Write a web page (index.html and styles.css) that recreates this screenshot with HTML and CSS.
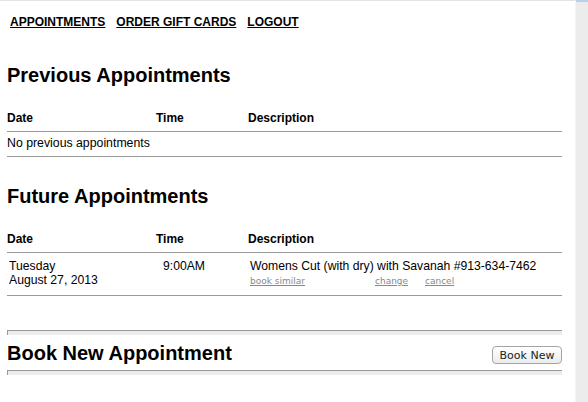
FILE: index.html
```html
<!DOCTYPE html>
<html>
<head>
    <title>My Appointments</title>
    <link rel="stylesheet" href="styles.css">
</head>
<body>
    <div class="page">
        <div class="nav">
            <a href="#">APPOINTMENTS</a>
            <a href="#">ORDER GIFT CARDS</a>
            <a href="#">LOGOUT</a>
        </div>

        <h2 class="first">Previous Appointments</h2>
        <div class="appts">
            <div class="row head">
                <div>Date</div>
                <div>Time</div>
                <div>Description</div>
            </div>
            <div class="row empty">
                <div>No previous appointments</div>
            </div>
        </div>

        <h2>Future Appointments</h2>
        <div class="appts">
            <div class="row head">
                <div>Date</div>
                <div>Time</div>
                <div>Description</div>
            </div>
            <div class="row appt">
                <div class="date">Tuesday<br>August 27, 2013</div>
                <div class="time">9:00AM</div>
                <div class="desc">
                    Womens Cut (with dry) with Savanah #913-634-7462
                    <div class="actions">
                        <a href="#" class="similar">book similar</a>
                        <a href="#" class="change">change</a>
                        <a href="#">cancel</a>
                    </div>
                </div>
            </div>
        </div>

        <div class="rule"></div>
        <div class="book-new">
            <h2>Book New Appointment</h2>
            <button>Book New</button>
        </div>
        <div class="rule"></div>
    </div>
    <div class="side"></div>
</body>
</html>
```

FILE: styles.css
```css
html, body {
    margin: 0;
    height: 100%;
}
body {
    display: flex;
    background: #ececec;
    font-family: "Liberation Sans", Arial, sans-serif;
    color: #000;
}
.page {
    width: 568px;
    padding: 0 0 0 7px;
    background: white;
    border-top: 1px solid #e4e4e4;
    border-right: 1px solid #f4f4f4;
}
.side {
    flex: 1;
    border-top: 2px solid #b9d0ec;
}
.nav {
    display: flex;
    gap: 11px;
    margin-top: 14px;
    padding-left: 3px;
    font-size: 12px;
    font-weight: bold;
    line-height: 15px;
}
.nav a {
    color: #000;
}
h2 {
    font-size: 20px;
    line-height: 24px;
    margin: 27px 0 24px;
}
h2.first {
    margin-top: 33px;
}
.appts {
    width: 555px;
    font-size: 12px;
    line-height: 14px;
}
.row {
    display: grid;
    grid-template-columns: 149px 92px 1fr;
    border-bottom: 1px solid #9a9a9a;
}
.row.head {
    font-weight: bold;
    padding-bottom: 6px;
}
.row.empty {
    padding: 4px 0 6px;
    font-size: 12.3px;
}
.row.empty div {
    grid-column: 1 / 4;
}
.row.appt {
    padding: 6px 0 8px;
    font-size: 12.2px;
}
.date, .desc {
    padding-left: 2px;
}
.time {
    padding-left: 7px;
}
.actions {
    display: flex;
    margin-top: 3px;
    font-family: "DejaVu Sans", Verdana, sans-serif;
    font-size: 9px;
    line-height: 11px;
}
.actions a {
    color: #888;
}
.actions .similar {
    width: 125px;
}
.actions .change {
    width: 50px;
}
.rule {
    width: 554px;
    height: 4px;
    margin-top: 34px;
    background: #ececec;
    border-top: 1px solid #9a9a9a;
    border-left: 1px solid #9a9a9a;
}
.book-new + .rule {
    margin-top: 0;
}
.book-new {
    width: 555px;
    height: 35px;
    display: flex;
    justify-content: space-between;
    align-items: center;
}
.book-new h2 {
    margin: 0;
}
button {
    margin: 5px 0 0 0;
    height: 18px;
    width: 70px;
    padding: 0;
    font-family: "DejaVu Sans", sans-serif;
    font-size: 11px;
    color: #222;
    background: linear-gradient(#ffffff, #ececec);
    border: 1px solid #a4a4a4;
    border-radius: 4px;
}
```
